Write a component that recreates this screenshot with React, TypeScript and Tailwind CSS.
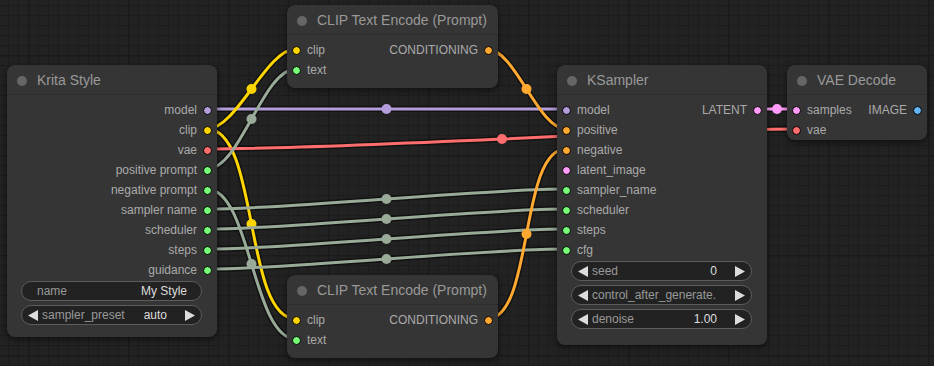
import React from 'react';

type Slot = { name: string; color: string };
type Widget = { label: string; value?: string; arrows?: boolean };

const G = '#99aa99';

const links: { a: [number, number]; b: [number, number]; c: string }[] = [
  { a: [207, 109], b: [566, 109], c: '#b39ddb' },
  { a: [207, 129], b: [296, 49], c: '#ffd500' },
  { a: [207, 129], b: [296, 319], c: '#ffd500' },
  { a: [207, 149], b: [797, 129], c: '#ff6e6e' },
  { a: [207, 169], b: [296, 69], c: G },
  { a: [207, 189], b: [296, 339], c: G },
  { a: [207, 209], b: [566, 189], c: G },
  { a: [207, 229], b: [566, 209], c: G },
  { a: [207, 249], b: [566, 229], c: G },
  { a: [207, 269], b: [566, 249], c: G },
  { a: [487, 49], b: [566, 129], c: '#ffa931' },
  { a: [487, 319], b: [566, 149], c: '#ffa931' },
  { a: [757, 109], b: [797, 109], c: '#ff9cf9' },
];

function linkPath(a: [number, number], b: [number, number]) {
  const d = Math.hypot(b[0] - a[0], b[1] - a[1]) * 0.25;
  return `M ${a[0]} ${a[1]} C ${a[0] + d} ${a[1]}, ${b[0] - d} ${b[1]}, ${b[0]} ${b[1]}`;
}

const Dot = ({ color }: { color: string }) => (
  <span
    className="block w-[9px] h-[9px] rounded-full border border-black shrink-0"
    style={{ backgroundColor: color }}
  />
);

const Arrow = ({ dir }: { dir: 'l' | 'r' }) => (
  <svg width="10" height="11" viewBox="0 0 10 11" className="shrink-0">
    <polygon points={dir === 'l' ? '10,0 10,11 0,5.5' : '0,0 0,11 10,5.5'} fill="#dddddd" />
  </svg>
);

const WidgetRow = ({ w }: { w: Widget }) => (
  <div className="h-5 rounded-full border border-[#5c5c5c] bg-[#222] flex items-center text-[12px] leading-none">
    {w.arrows ? (
      <>
        <span className="ml-[6px]"><Arrow dir="l" /></span>
        <span className="ml-[4px] text-[#999] whitespace-nowrap">{w.label}</span>
        <span className="ml-auto text-[#ddd]">{w.value}</span>
        <span className="ml-[18px] mr-[6px]"><Arrow dir="r" /></span>
      </>
    ) : (
      <>
        <span className="ml-[15px] text-[#999]">{w.label}</span>
        <span className="ml-auto mr-[14px] text-[#ddd]">{w.value}</span>
      </>
    )}
  </div>
);

const Node = ({
  className,
  title,
  inputs = [],
  outputs = [],
  widgets = [],
}: {
  className: string;
  title: string;
  inputs?: Slot[];
  outputs?: Slot[];
  widgets?: Widget[];
}) => {
  const rows = Math.max(inputs.length, outputs.length);
  return (
    <div
      className={`absolute rounded-lg bg-[#353535] shadow-[0_2px_6px_rgba(0,0,0,0.55)] ${className}`}
    >
      <div className="h-[30px] flex items-center border-b border-[#2e2e2e] pt-[2px]">
        <span className="ml-[10px] w-[10px] h-[10px] rounded-full bg-[#666]" />
        <span className="ml-[10px] text-[14px] text-[#999] whitespace-nowrap">{title}</span>
      </div>
      <div className="pt-[5px]">
        {Array.from({ length: rows }).map((_, i) => (
          <div key={i} className="h-5 flex items-center text-[12px] text-[#aaa]">
            {inputs[i] && (
              <>
                <span className="ml-[5px]"><Dot color={inputs[i].color} /></span>
                <span className="ml-[6px]">{inputs[i].name}</span>
              </>
            )}
            {outputs[i] && (
              <>
                <span className="ml-auto">{outputs[i].name}</span>
                <span className="ml-[6px] mr-[5px]"><Dot color={outputs[i].color} /></span>
              </>
            )}
          </div>
        ))}
        {widgets.length > 0 && (
          <div className="mt-[1px] pl-[14px] pr-[15px] flex flex-col gap-1">
            {widgets.map((w) => (
              <WidgetRow key={w.label} w={w} />
            ))}
          </div>
        )}
      </div>
    </div>
  );
};

export default function App() {
  return (
    <div className="relative w-[934px] h-[366px] overflow-hidden bg-[#222222] font-['Liberation_Sans',Arial,sans-serif]">
      <svg className="absolute inset-0" width="934" height="366">
        <defs>
          <pattern id="minor" width="10" height="10" patternUnits="userSpaceOnUse" x="8" y="5">
            <path d="M 0.5 0 L 0.5 10 M 0 0.5 L 10 0.5" stroke="#1c1c1c" strokeWidth="1" fill="none" />
          </pattern>
          <pattern id="major" width="100" height="100" patternUnits="userSpaceOnUse" x="28" y="55">
            <path d="M 0.5 0 L 0.5 100 M 0 0.5 L 100 0.5" stroke="#1a1a1a" strokeWidth="2" fill="none" />
          </pattern>
        </defs>
        <rect width="934" height="366" fill="url(#minor)" />
        <rect width="934" height="366" fill="url(#major)" />
        {links.map((l, i) => (
          <path key={`b${i}`} d={linkPath(l.a, l.b)} stroke="rgba(0,0,0,0.45)" strokeWidth="6" fill="none" />
        ))}
        {links.map((l, i) => (
          <g key={`l${i}`}>
            <path d={linkPath(l.a, l.b)} stroke={l.c} strokeWidth="3" fill="none" />
            <circle cx={(l.a[0] + l.b[0]) / 2} cy={(l.a[1] + l.b[1]) / 2} r="5" fill={l.c} />
          </g>
        ))}
      </svg>

      <Node
        className="left-[7px] top-[65px] w-[210px] h-[272px]"
        title="Krita Style"
        outputs={[
          { name: 'model', color: '#b39ddb' },
          { name: 'clip', color: '#ffd500' },
          { name: 'vae', color: '#ff6e6e' },
          { name: 'positive prompt', color: '#77ff77' },
          { name: 'negative prompt', color: '#77ff77' },
          { name: 'sampler name', color: '#77ff77' },
          { name: 'scheduler', color: '#77ff77' },
          { name: 'steps', color: '#77ff77' },
          { name: 'guidance', color: '#77ff77' },
        ]}
        widgets={[
          { label: 'name', value: 'My Style' },
          { label: 'sampler_preset', value: 'auto', arrows: true },
        ]}
      />

      <Node
        className="left-[287px] top-[5px] w-[211px] h-[83px]"
        title="CLIP Text Encode (Prompt)"
        inputs={[
          { name: 'clip', color: '#ffd500' },
          { name: 'text', color: '#77ff77' },
        ]}
        outputs={[{ name: 'CONDITIONING', color: '#ffa931' }]}
      />

      <Node
        className="left-[287px] top-[275px] w-[211px] h-[83px]"
        title="CLIP Text Encode (Prompt)"
        inputs={[
          { name: 'clip', color: '#ffd500' },
          { name: 'text', color: '#77ff77' },
        ]}
        outputs={[{ name: 'CONDITIONING', color: '#ffa931' }]}
      />

      <Node
        className="left-[557px] top-[65px] w-[210px] h-[280px]"
        title="KSampler"
        inputs={[
          { name: 'model', color: '#b39ddb' },
          { name: 'positive', color: '#ffa931' },
          { name: 'negative', color: '#ffa931' },
          { name: 'latent_image', color: '#ff9cf9' },
          { name: 'sampler_name', color: '#77ff77' },
          { name: 'scheduler', color: '#77ff77' },
          { name: 'steps', color: '#77ff77' },
          { name: 'cfg', color: '#77ff77' },
        ]}
        outputs={[{ name: 'LATENT', color: '#ff9cf9' }]}
        widgets={[
          { label: 'seed', value: '0', arrows: true },
          { label: 'control_after_generate.', value: '', arrows: true },
          { label: 'denoise', value: '1.00', arrows: true },
        ]}
      />

      <Node
        className="left-[787px] top-[65px] w-[140px] h-[75px]"
        title="VAE Decode"
        inputs={[
          { name: 'samples', color: '#ff9cf9' },
          { name: 'vae', color: '#ff6e6e' },
        ]}
        outputs={[{ name: 'IMAGE', color: '#64b5f6' }]}
      />
    </div>
  );
}
